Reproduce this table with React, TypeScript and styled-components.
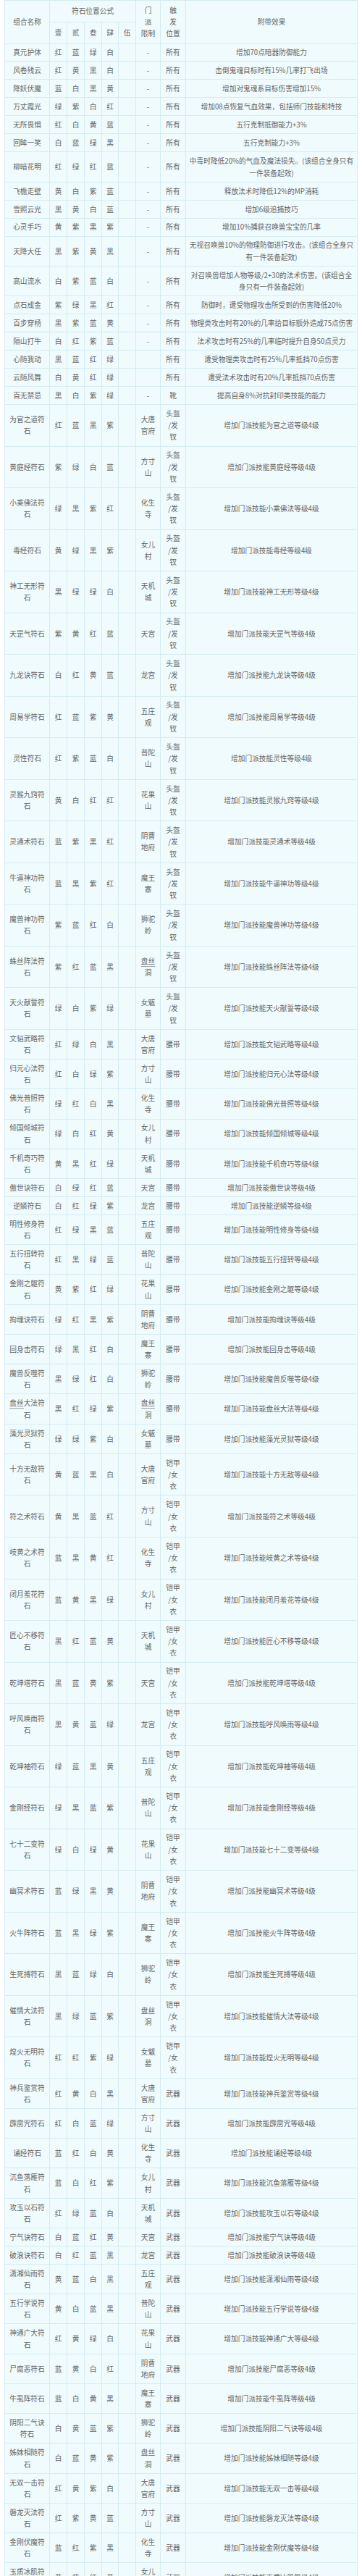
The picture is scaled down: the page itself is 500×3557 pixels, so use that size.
import React from 'react';
import styled, { createGlobalStyle, css } from 'styled-components';

const Global = createGlobalStyle`
  html, body { margin: 0; padding: 0; background: #ffffff; }
  body { font-family: "Noto Sans CJK SC", "Noto Sans", sans-serif; }
`;

const Page = styled.div`
  padding: 0 6px;
`;

const Table = styled.table`
  width: 488px;
  table-layout: fixed;
  border-collapse: collapse;
  background: #f0fbfd;
  color: #666666;
  font-size: 9.7px;
  line-height: 16.26px;
`;

const cellBase = css`
  border: 1px solid #d6ecf1;
  padding: 3.87px 3px;
  text-align: center;
  vertical-align: middle;
  word-break: break-all;
  font-weight: normal;
`;

const Td = styled.td`
  ${cellBase}
`;

const Th = styled.th`
  ${cellBase}
`;

const HeadRow = styled.tr<{ $h: number }>`
  height: ${(p) => p.$h}px;
`;

const Linked = styled.span`
  border-bottom: 1px solid #9aa4a8;
`;

type Row = {
  name: string;
  colors: string;
  sect: string;
  slot: string;
  effect: string;
  link?: boolean;
  linkName?: boolean;
};

const HELM = '头盔|/发|钗';
const ARMOR = '铠甲|/女|衣';

const general: Row[] = [
  { name: '真元护体', colors: '红蓝绿白', sect: '-', slot: '所有', effect: '增加70点暗器防御能力' },
  { name: '风卷残云', colors: '红黄黑白', sect: '-', slot: '所有', effect: '击倒鬼魂目标时有15%几率打飞出场' },
  { name: '降妖伏魔', colors: '蓝白黑黄', sect: '-', slot: '所有', effect: '增加对鬼魂系目标伤害增加15%' },
  { name: '万丈霞光', colors: '绿紫白红', sect: '-', slot: '所有', effect: '增加08点恢复气血效果，包括师门技能和特技' },
  { name: '无所畏惧', colors: '红白黄蓝', sect: '-', slot: '所有', effect: '五行克制抵御能力+3%' },
  { name: '回眸一笑', colors: '白蓝绿黑', sect: '-', slot: '所有', effect: '五行克制能力+3%' },
  { name: '柳暗花明', colors: '红绿红蓝', sect: '-', slot: '所有', effect: '中毒时降低20%的气血及魔法损失。(该组合全身只有一件装备起效)' },
  { name: '飞檐走壁', colors: '黄白紫蓝', sect: '-', slot: '所有', effect: '释放法术时降低12%的MP消耗' },
  { name: '雪照云光', colors: '黑黄白蓝', sect: '-', slot: '所有', effect: '增加6级追捕技巧' },
  { name: '心灵手巧', colors: '黄紫黑紫', sect: '-', slot: '所有', effect: '增加10%捕获召唤兽宝宝的几率' },
  { name: '天降大任', colors: '黑紫黄黑', sect: '-', slot: '所有', effect: '无视召唤兽10%的物理防御进行攻击。(该组合全身只有一件装备起效)' },
  { name: '高山流水', colors: '白紫蓝白', sect: '-', slot: '所有', effect: '对召唤兽增加人物等级/2+30的法术伤害。(该组合全身只有一件装备起效)' },
  { name: '点石成金', colors: '紫绿黑红', sect: '-', slot: '所有', effect: '防御时，遭受物理攻击所受到的伤害降低20%' },
  { name: '百步穿杨', colors: '黑紫蓝黄', sect: '-', slot: '所有', effect: '物理类攻击时有20%的几率给目标额外造成75点伤害' },
  { name: '隔山打牛', colors: '白红紫蓝', sect: '-', slot: '所有', effect: '法术攻击时有25%的几率临时提升自身50点灵力' },
  { name: '心随我动', colors: '黑蓝红绿', sect: '', slot: '所有', effect: '遭受物理类攻击时有25%几率抵挡70点伤害' },
  { name: '云随风舞', colors: '白黄红绿', sect: '', slot: '所有', effect: '遭受法术攻击时有20%几率抵挡70点伤害' },
  { name: '百无禁忌', colors: '黑白紫绿', sect: '-', slot: '靴', effect: '提高自身8%对抗封印类技能的能力' },
];

type S = [string, string, string, boolean?, boolean?];

const mk = (slot: string, list: S[]): Row[] =>
  list.map(([skill, colors, sect, link, linkName]) => ({
    name: skill + '符石',
    colors,
    sect,
    slot,
    effect: '增加门派技能' + skill + '等级4级',
    link,
    linkName,
  }));

const helm = mk(HELM, [
  ['为官之道', '红蓝黑紫', '大唐官府'],
  ['黄庭经', '紫绿白蓝', '方寸山'],
  ['小乘佛法', '绿黑紫红', '化生寺'],
  ['毒经', '黄绿黑紫', '女儿村'],
  ['神工无形', '黑绿绿白', '天机城'],
  ['天罡气', '紫黄红蓝', '天宫'],
  ['九龙诀', '白红黄蓝', '龙宫'],
  ['周易学', '红蓝紫黄', '五庄观'],
  ['灵性', '红紫蓝白', '普陀山'],
  ['灵猴九窍', '黄白红红', '花果山'],
  ['灵通术', '蓝紫黑红', '阴曹地府'],
  ['牛逼神功', '蓝黑紫红', '魔王寨'],
  ['魔兽神功', '紫蓝红白', '狮驼岭'],
  ['蛛丝阵法', '紫红蓝黑', '盘丝洞', true],
  ['天火献誓', '绿白紫绿', '女魃墓'],
]);

const belt = mk('腰带', [
  ['文韬武略', '红绿白黑', '大唐官府'],
  ['归元心法', '红白绿紫', '方寸山'],
  ['佛光普照', '绿红白黑', '化生寺'],
  ['倾国倾城', '绿白红黄', '女儿村'],
  ['千机奇巧', '黄黑红绿', '天机城'],
  ['傲世诀', '白绿红蓝', '天宫'],
  ['逆鳞', '白红绿紫', '龙宫'],
  ['明性修身', '红绿黑蓝', '五庄观'],
  ['五行扭转', '红黑绿蓝', '普陀山'],
  ['金刚之躯', '黄紫红绿', '花果山'],
  ['拘魂诀', '绿红黑紫', '阴曹地府'],
  ['回身击', '绿黑红白', '魔王寨'],
  ['魔兽反噬', '黑绿红白', '狮驼岭'],
  ['盘丝大法', '黑红绿紫', '盘丝洞', true, true],
  ['藻光灵狱', '绿绿紫白', '女魃墓'],
]);

const armor = mk(ARMOR, [
  ['十方无敌', '黄蓝黑白', '大唐官府'],
  ['符之术', '黄黑蓝红', '方寸山'],
  ['岐黄之术', '蓝黑黄红', '化生寺'],
  ['闭月羞花', '蓝黄黑绿', '女儿村'],
  ['匠心不移', '黑红蓝黄', '天机城'],
  ['乾坤塔', '黑蓝黄紫', '天宫'],
  ['呼风唤雨', '黑黄蓝绿', '龙宫'],
  ['乾坤袖', '绿蓝黑黄', '五庄观'],
  ['金刚经', '绿黑蓝紫', '普陀山'],
  ['七十二变', '绿白绿黄', '花果山'],
  ['幽冥术', '蓝绿黑黄', '阴曹地府'],
  ['火牛阵', '蓝黑绿紫', '魔王寨'],
  ['生死搏', '黑蓝绿白', '狮驼岭'],
  ['催情大法', '黑绿蓝紫', '盘丝洞'],
  ['煌火无明', '红红紫绿', '女魃墓'],
]);

const weapon = mk('武器', [
  ['神兵鉴赏', '红黄白黑', '大唐官府'],
  ['霹雳咒', '红白蓝绿', '方寸山'],
  ['诵经', '蓝红白黄', '化生寺'],
  ['沉鱼落雁', '蓝白红紫', '女儿村'],
  ['攻玉以石', '红绿蓝白', '天机城'],
  ['宁气诀', '白蓝红黄', '天宫'],
  ['破浪诀', '白红蓝黑', '龙宫'],
  ['潇湘仙雨', '黄蓝白黑', '五庄观'],
  ['五行学说', '黄白蓝黑', '普陀山'],
  ['神通广大', '红黄绿白', '花果山'],
  ['尸腐恶', '蓝黄白红', '阴曹地府'],
  ['牛虱阵', '蓝白黄黑', '魔王寨'],
  ['阴阳二气诀', '白黄蓝紫', '狮驼岭'],
  ['姊妹相随', '白蓝黄紫', '盘丝洞'],
  ['无双一击', '红黄紫白', '大唐官府'],
  ['磐龙灭法', '红紫黄蓝', '方寸山'],
  ['金刚伏魔', '蓝红紫黑', '化生寺'],
  ['玉质冰肌', '黄紫红黄', '女儿村'],
]);

const rows: Row[] = [...general, ...helm, ...belt, ...armor, ...weapon];

const Lines: React.FC<{ text: string }> = ({ text }) => {
  const parts = text.split('|');
  return (
    <>
      {parts.map((p, i) => (
        <React.Fragment key={i}>
          {i > 0 && <br />}
          {p}
        </React.Fragment>
      ))}
    </>
  );
};

const NameText: React.FC<{ name: string; link?: boolean }> = ({ name, link }) =>
  link ? (
    <>
      <Linked>{name.slice(0, 2)}</Linked>
      {name.slice(2)}
    </>
  ) : (
    <>{name}</>
  );

export default function App() {
  return (
    <>
      <Global />
      <Page>
        <Table>
          <colgroup>
            <col style={{ width: 62 }} />
            <col style={{ width: 24 }} />
            <col style={{ width: 24 }} />
            <col style={{ width: 24 }} />
            <col style={{ width: 23 }} />
            <col style={{ width: 24 }} />
            <col style={{ width: 34 }} />
            <col style={{ width: 35 }} />
            <col />
          </colgroup>
          <thead>
            <HeadRow $h={30}>
              <Th rowSpan={2}>组合名称</Th>
              <Th colSpan={5}>符石位置公式</Th>
              <Th rowSpan={2}>
                <Lines text="门|派|限制" />
              </Th>
              <Th rowSpan={2}>
                <Lines text="触|发|位置" />
              </Th>
              <Th rowSpan={2}>附带效果</Th>
            </HeadRow>
            <HeadRow $h={29.5}>
              <Th>壹</Th>
              <Th>贰</Th>
              <Th>叁</Th>
              <Th>肆</Th>
              <Th>伍</Th>
            </HeadRow>
          </thead>
          <tbody>
            {rows.map((r) => (
              <tr key={r.name}>
                <Td>
                  <NameText name={r.name} link={r.linkName} />
                </Td>
                {r.colors.split('').map((c, i) => (
                  <Td key={i}>{c}</Td>
                ))}
                <Td />
                <Td>
                  <NameText name={r.sect} link={r.link} />
                </Td>
                <Td>
                  <Lines text={r.slot} />
                </Td>
                <Td>{r.effect}</Td>
              </tr>
            ))}
          </tbody>
        </Table>
      </Page>
    </>
  );
}
